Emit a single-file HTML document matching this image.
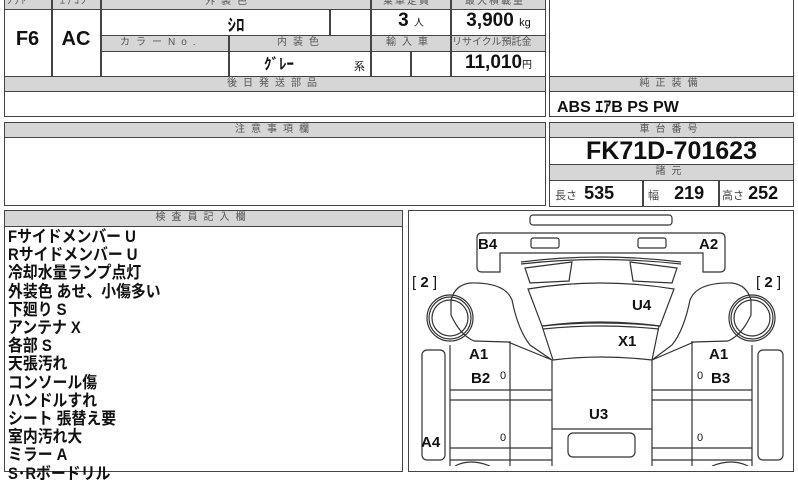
<!DOCTYPE html>
<html><head><meta charset="utf-8"><style>
body{margin:0;width:798px;height:466px;background:#fff;position:relative;overflow:hidden;font-family:"Liberation Sans","Noto Sans CJK JP",sans-serif;color:#111}
.a{position:absolute;box-sizing:border-box}
.b{border:1.5px solid #444}
.h{background:#d6d6d6;border:1.5px solid #444;font-size:10px;color:#555;text-align:center;letter-spacing:6px;line-height:13px}
.v{font-weight:bold;text-align:center}
.l{position:absolute;background:#444}
</style></head><body>
<div class="a b" style="left:4px;top:-2px;width:542px;height:119px"></div>
<div class="a h" style="left:4px;top:-6px;width:542px;height:16px;font-size:10px;letter-spacing:2px;line-height:14px"><span style="position:absolute;left:2px">ｼﾌﾄ</span><span style="position:absolute;left:55px">ｴｱｺﾝ</span><span style="position:absolute;left:200px;letter-spacing:6px">外装色</span><span style="position:absolute;left:378px">乗車定員</span><span style="position:absolute;left:460px">最大積載量</span></div>
<div class="a h" style="left:101px;top:35px;width:445px;height:17px;line-height:14px"><span style="position:absolute;left:18px">カラーNo.</span><span style="position:absolute;left:175px">内装色</span><span style="position:absolute;left:284px">輸入車</span><span style="position:absolute;left:350px;letter-spacing:0">リサイクル預託金</span></div>
<div class="a h" style="left:4px;top:76px;width:542px;height:16px">後日発送部品</div>
<div class="l" style="left:51px;top:0;width:1.5px;height:77px"></div>
<div class="l" style="left:100px;top:0;width:1.5px;height:77px"></div>
<div class="l" style="left:228px;top:35px;width:1.5px;height:42px"></div>
<div class="l" style="left:329px;top:10px;width:1.5px;height:25px"></div>
<div class="l" style="left:370px;top:0;width:1.5px;height:77px"></div>
<div class="l" style="left:410px;top:52px;width:1.5px;height:25px"></div>
<div class="l" style="left:450px;top:0;width:1.5px;height:77px"></div>
<div class="a v" style="left:4px;top:28px;width:47px;font-size:20px">F6</div>
<div class="a v" style="left:52px;top:28px;width:48px;font-size:20px">AC</div>
<div class="a v" style="left:101px;top:11px;width:270px;font-size:17px">ｼﾛ</div>
<div class="a v" style="left:371px;top:10px;width:80px;font-size:19px">3 <span style="font-size:10px;font-weight:normal">人</span></div>
<div class="a v" style="left:451px;top:10px;width:95px;font-size:19px">3,900 <span style="font-size:11px;font-weight:normal">kg</span></div>
<div class="a v" style="left:229px;top:53px;width:100px;font-size:15px">ｸﾞﾚｰ</div>
<div class="a" style="left:354px;top:58px;font-size:11px">系</div>
<div class="a v" style="left:451px;top:52px;width:95px;font-size:19px">11,010<span style="font-size:10px;font-weight:normal">円</span></div>
<div class="a b" style="left:549px;top:-2px;width:245px;height:119px"></div>
<div class="a h" style="left:549px;top:76px;width:245px;height:16px">純正装備</div>
<div class="a" style="left:557px;top:93px;font-size:16px;font-weight:bold">ABS ｴｱB PS PW</div>
<div class="a b" style="left:4px;top:122px;width:542px;height:84px"></div>
<div class="a h" style="left:4px;top:122px;width:542px;height:16px">注意事項欄</div>
<div class="a b" style="left:549px;top:122px;width:245px;height:85px"></div>
<div class="a h" style="left:549px;top:122px;width:245px;height:16px">車台番号</div>
<div class="a v" style="left:549px;top:137px;width:245px;font-size:25px;line-height:28px">FK71D-701623</div>
<div class="a h" style="left:549px;top:164px;width:245px;height:17px">諸元</div>
<div class="l" style="left:642px;top:181px;width:1.5px;height:25px"></div>
<div class="l" style="left:718px;top:181px;width:1.5px;height:25px"></div>
<div class="a" style="left:555px;top:183px;font-size:11px;color:#444">長さ <b style="font-size:18px;color:#111;margin-left:4px">535</b></div>
<div class="a" style="left:648px;top:183px;font-size:11px;color:#444">幅 <b style="font-size:18px;color:#111;margin-left:12px">219</b></div>
<div class="a" style="left:722px;top:183px;font-size:11px;color:#444">高さ <b style="font-size:18px;color:#111;margin-left:1px">252</b></div>
<div class="a b" style="left:4px;top:210px;width:399px;height:262px"></div>
<div class="a h" style="left:4px;top:210px;width:399px;height:17px">検査員記入欄</div>
<div class="a" style="left:8px;top:228px;font-size:16.5px;font-weight:bold;line-height:18.2px;transform:scaleX(0.9);transform-origin:0 0">Fサイドメンバー U<br>Rサイドメンバー U<br>冷却水量ランプ点灯<br>外装色 あせ、小傷多い<br>下廻り S<br>アンテナ X<br>各部 S<br>天張汚れ<br>コンソール傷<br>ハンドルすれ<br>シート 張替え要<br>室内汚れ大<br>ミラー A<br>S･Rボードリル</div>
<div class="a b" style="left:408px;top:210px;width:386px;height:262px"></div>
<svg class="a" style="left:0;top:0" width="798" height="466" viewBox="0 0 798 466" fill="none" stroke="#333" stroke-width="1.2">
<rect x="530" y="215" width="142" height="10" rx="3"/>
<path d="M500 272 H482 Q477 272 477 267 V238 Q477 233 482 233 H720 Q725 233 725 238 V267 Q725 272 720 272 H703 V253 H500 Z"/>
<rect x="531" y="238" width="28" height="10" rx="2"/>
<rect x="638" y="238" width="28" height="10" rx="2"/>
<path d="M521 262 Q600 252 681 262 M521 264 Q600 255 681 264"/>
<path d="M525 268 L572 262 L569 281 L530 283 Z M677 268 L630 262 L633 281 L672 283 Z"/>
<path d="M528 289 Q600 277 674 289 L660 326 Q600 318 542 326 Z"/>
<path d="M543 326 Q600 320 660 326 M543 329 Q600 323 659 329"/>
<path d="M542 326 L553 360 Q600 354 652 360 L659 326"/>
<path d="M451 300 Q455 285 470 283 Q505 282 512 300 Q518 330 530 345 L552 360 L508 342 L474 341 Q460 335 451 315 Z"/>
<path d="M751 300 Q747 285 732 283 Q697 282 690 300 Q684 330 672 345 L652 360 L694 342 L728 341 Q742 335 751 315 Z"/>
<circle cx="450" cy="318" r="23"/><circle cx="450" cy="318" r="21"/><circle cx="450" cy="318" r="18"/>
<circle cx="752" cy="318" r="23"/><circle cx="752" cy="318" r="21"/><circle cx="752" cy="318" r="18"/>
<rect x="422" y="350" width="23" height="110" rx="5"/>
<rect x="758" y="350" width="25" height="110" rx="5"/>
<path d="M450 345 V466 M510 341 V466 M450 390 H552 M450 400 H552 M450 448 H552 M450 460 H552"/>
<path d="M752 345 V466 M692 341 V466 M652 390 H752 M652 400 H752 M652 448 H752 M652 460 H752"/>
<path d="M552 360 V466 M652 360 V466 M552 429 H652"/>
<rect x="568" y="433" width="67" height="24" rx="5"/>
<path d="M455 466 Q470 458 490 466 M712 466 Q732 458 748 466"/>
</svg>
<div class="a" style="font-weight:bold;font-size:15px;left:0;top:0;width:798px;height:466px">
<span class="a" style="left:478px;top:236px">B4</span>
<span class="a" style="left:699px;top:236px">A2</span>
<span class="a" style="left:412px;top:274px;font-weight:normal">[ <b>2</b> ]</span>
<span class="a" style="left:756px;top:274px;font-weight:normal">[ <b>2</b> ]</span>
<span class="a" style="left:632px;top:297px">U4</span>
<span class="a" style="left:618px;top:333px">X1</span>
<span class="a" style="left:469px;top:346px">A1</span>
<span class="a" style="left:471px;top:370px">B2</span>
<span class="a" style="left:709px;top:346px">A1</span>
<span class="a" style="left:711px;top:370px">B3</span>
<span class="a" style="left:589px;top:406px">U3</span>
<span class="a" style="left:421px;top:434px">A4</span>
<span class="a" style="left:500px;top:370px;font-size:11px;font-weight:normal">0</span>
<span class="a" style="left:697px;top:370px;font-size:11px;font-weight:normal">0</span>
<span class="a" style="left:500px;top:432px;font-size:11px;font-weight:normal">0</span>
<span class="a" style="left:697px;top:432px;font-size:11px;font-weight:normal">0</span>
</div>
</body></html>
